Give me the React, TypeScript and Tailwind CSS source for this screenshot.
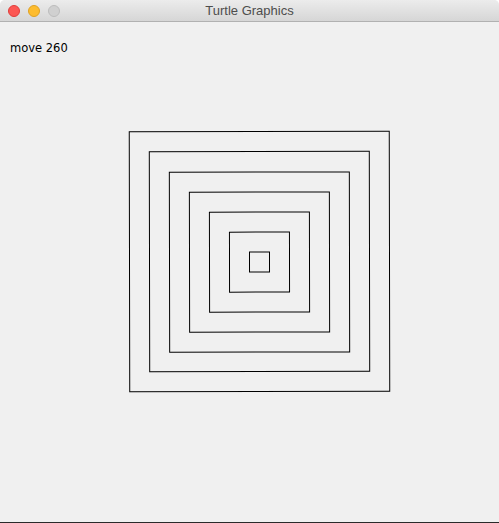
const sizes = [260, 220, 180, 140, 100, 60, 20];

function Light({ color, border }: { color: string; border: string }) {
  return <span className={`block h-3 w-3 rounded-full border ${color} ${border}`} />;
}

export default function App() {
  return (
    <div className="flex h-[523px] w-[499px] flex-col overflow-hidden rounded-t-[5px] border-b border-[#2a2a2a] bg-[#f0f0f0] font-['DejaVu_Sans',sans-serif]">
      {/* title bar */}
      <div className="relative flex h-[22px] shrink-0 items-center justify-center border-b border-[#b1b1b1] bg-gradient-to-b from-[#ececec] to-[#d6d6d6]">
        <div className="absolute left-[8px] top-[5px] flex gap-[8px]">
          <Light color="bg-[#fc5753]" border="border-[#df3d3a]" />
          <Light color="bg-[#fdbc2e]" border="border-[#dea123]" />
          <Light color="bg-[#d0d0d0]" border="border-[#bcbcbc]" />
        </div>
        <span className="font-['Liberation_Sans',sans-serif] text-[13px] text-[#4d4d4d]">Turtle Graphics</span>
      </div>

      {/* canvas */}
      <div className="relative flex-1">
        <svg className="absolute inset-0" width="499" height="500" viewBox="0 0 499 500">
          <g transform="rotate(-0.11 259.5 240)" fill="none" stroke="#000" strokeWidth="1">
            {sizes.map((s) => (
              <rect key={s} x={259.5 - s / 2} y={239.5 - s / 2 + (s < 200 ? 0.6 : 0)} width={s} height={s} />
            ))}
          </g>
        </svg>
        <p className="relative pl-[10px] pt-[19px] text-[11.5px] leading-[14px] text-black">move 260</p>
      </div>
    </div>
  );
}
